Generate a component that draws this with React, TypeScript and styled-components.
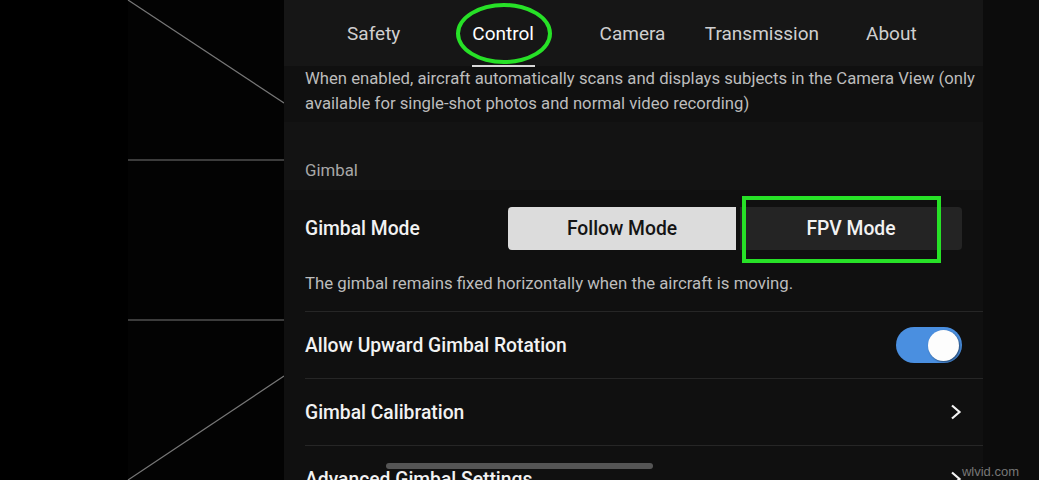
import React from 'react'
import styled, { createGlobalStyle } from 'styled-components'

const GlobalStyle = createGlobalStyle`
  html, body {
    margin: 0;
    padding: 0;
    background: #000;
  }
  * {
    box-sizing: border-box;
  }
`

const StyledScreen = styled.div`
  display: flex;
  width: 1039px;
  height: 480px;
  overflow: hidden;
  position: relative;
  font-family: Roboto, "Liberation Sans", sans-serif;
  background: #000;
`
const StyledCameraView = styled.div`
  width: 284px;
  height: 100%;
  flex-shrink: 0;
  background: linear-gradient(to right, #000 0, #000 128px, #030303 128px);
`
const StyledPanel = styled.div`
  position: relative;
  width: 699px;
  height: 100%;
  flex-shrink: 0;
  display: flex;
  flex-direction: column;
  background: #101010;
  overflow: hidden;
  & > * {
    flex-shrink: 0;
  }
`
const StyledGutter = styled.div`
  flex: 1;
  background: #0c0c0c;
`
const StyledTabBar = styled.div`
  position: relative;
  display: flex;
  height: 66px;
  padding: 0 27px 0 25px;
  background: #161616;
`
const StyledTab = styled.div<{ $active?: boolean }>`
  position: relative;
  flex: 1;
  display: flex;
  align-items: center;
  justify-content: center;
  font-size: 19px;
  color: ${p => (p.$active ? '#fff' : '#cfcfcf')};
  &::after {
    content: '';
    display: ${p => (p.$active ? 'block' : 'none')};
    position: absolute;
    bottom: -1px;
    left: 50%;
    width: 63px;
    height: 2px;
    margin-left: -31px;
    background: #d8d8d8;
  }
`
const StyledEllipse = styled.div`
  position: absolute;
  left: 172px;
  top: 3px;
  width: 96px;
  height: 61px;
  border: 4px solid #27e127;
  border-radius: 50%;
`
const StyledDescription = styled.p`
  margin: 0;
  padding: 0 0 6px 21px;
  font-size: 16.7px;
  line-height: 25px;
  color: #bdbdbd;
`
const StyledSectionHeader = styled.div`
  display: flex;
  align-items: flex-end;
  height: 68px;
  padding: 0 21px 10px;
  font-size: 16.8px;
  line-height: 20px;
  color: #a8a8a8;
  background: #131313;
`
const StyledModeBlock = styled.div`
  position: relative;
  padding: 17px 21px 18px;
`
const StyledModeRow = styled.div`
  display: flex;
  align-items: center;
  justify-content: space-between;
`
const StyledLabel = styled.span`
  font-size: 19.3px;
  font-weight: 500;
  color: #f2f2f2;
`
const StyledSegments = styled.div`
  display: grid;
  grid-template-columns: 228px 222px;
  gap: 4px;
  width: 454px;
`
const StyledSegment = styled.div<{ $selected?: boolean }>`
  display: flex;
  align-items: center;
  justify-content: center;
  height: 43px;
  border-radius: ${p => (p.$selected ? '4px 0 0 4px' : '0 4px 4px 0')};
  font-size: 19.3px;
  font-weight: 500;
  background: ${p => (p.$selected ? '#dcdcdc' : '#242424')};
  color: ${p => (p.$selected ? '#141414' : '#f2f2f2')};
`
const StyledHighlight = styled.div`
  position: absolute;
  left: 458px;
  top: 6px;
  width: 199px;
  height: 67px;
  border: 4px solid #27e127;
`
const StyledHint = styled.div`
  margin-top: 23px;
  font-size: 16.8px;
  line-height: 20px;
  color: #bdbdbd;
`
const StyledRow = styled.div`
  display: flex;
  align-items: center;
  justify-content: space-between;
  height: 67px;
  margin-left: 21px;
  padding-right: 21px;
  border-top: 1px solid #262626;
`
const StyledSwitch = styled.div<{ $on?: boolean }>`
  display: flex;
  align-items: center;
  justify-content: ${p => (p.$on ? 'flex-end' : 'flex-start')};
  width: 66px;
  height: 36px;
  padding: 3px;
  border-radius: 18px;
  background: ${p => (p.$on ? '#4a8fe0' : '#3a3a3a')};
`
const StyledKnob = styled.div`
  width: 31px;
  height: 31px;
  border-radius: 50%;
  background: #fdfdfd;
  box-shadow: 1px 1px 2px rgba(0, 0, 0, 0.5);
`
const StyledScrollBar = styled.div`
  position: absolute;
  left: 102px;
  top: 463px;
  width: 267px;
  height: 6px;
  border-radius: 3px;
  background: #555;
`
const StyledWatermark = styled.div`
  position: absolute;
  right: 20px;
  bottom: 1px;
  font-family: "Liberation Sans", sans-serif;
  font-size: 13px;
  line-height: 15px;
  color: #777;
`

const tabs = ['Safety', 'Control', 'Camera', 'Transmission', 'About']

const Chevron = () => (
  <svg width="12" height="16" viewBox="0 0 12 16">
    <path d="M2 1.5 L9.5 8 L2 14.5" fill="none" stroke="#f4f4f4" strokeWidth="2.2" />
  </svg>
)

const CameraLines = () => (
  <svg width="284" height="480" viewBox="0 0 284 480">
    <g stroke="#777" strokeWidth="1.2" fill="none">
      <line x1="128" y1="0" x2="284" y2="103" />
      <line x1="128" y1="160" x2="284" y2="160" />
      <line x1="128" y1="320" x2="284" y2="320" />
      <line x1="284" y1="376" x2="128" y2="480" />
    </g>
  </svg>
)

const App = () => {
  return (
    <StyledScreen>
      <GlobalStyle />
      <StyledCameraView>
        <CameraLines />
      </StyledCameraView>
      <StyledPanel>
        <StyledTabBar>
          {tabs.map(tab => (
            <StyledTab key={tab} $active={tab === 'Control'}>{tab}</StyledTab>
          ))}
          <StyledEllipse />
        </StyledTabBar>
        <StyledDescription>
          When enabled, aircraft automatically scans and displays subjects in the Camera View (only
          available for single-shot photos and normal video recording)
        </StyledDescription>
        <StyledSectionHeader>Gimbal</StyledSectionHeader>
        <StyledModeBlock>
          <StyledModeRow>
            <StyledLabel>Gimbal Mode</StyledLabel>
            <StyledSegments>
              <StyledSegment $selected>Follow Mode</StyledSegment>
              <StyledSegment>FPV Mode</StyledSegment>
            </StyledSegments>
          </StyledModeRow>
          <StyledHint>The gimbal remains fixed horizontally when the aircraft is moving.</StyledHint>
          <StyledHighlight />
        </StyledModeBlock>
        <StyledRow>
          <StyledLabel>Allow Upward Gimbal Rotation</StyledLabel>
          <StyledSwitch $on>
            <StyledKnob />
          </StyledSwitch>
        </StyledRow>
        <StyledRow>
          <StyledLabel>Gimbal Calibration</StyledLabel>
          <Chevron />
        </StyledRow>
        <StyledRow>
          <StyledLabel>Advanced Gimbal Settings</StyledLabel>
          <Chevron />
        </StyledRow>
        <StyledScrollBar />
      </StyledPanel>
      <StyledGutter />
      <StyledWatermark>wlvid.com</StyledWatermark>
    </StyledScreen>
  )
}

export default App
